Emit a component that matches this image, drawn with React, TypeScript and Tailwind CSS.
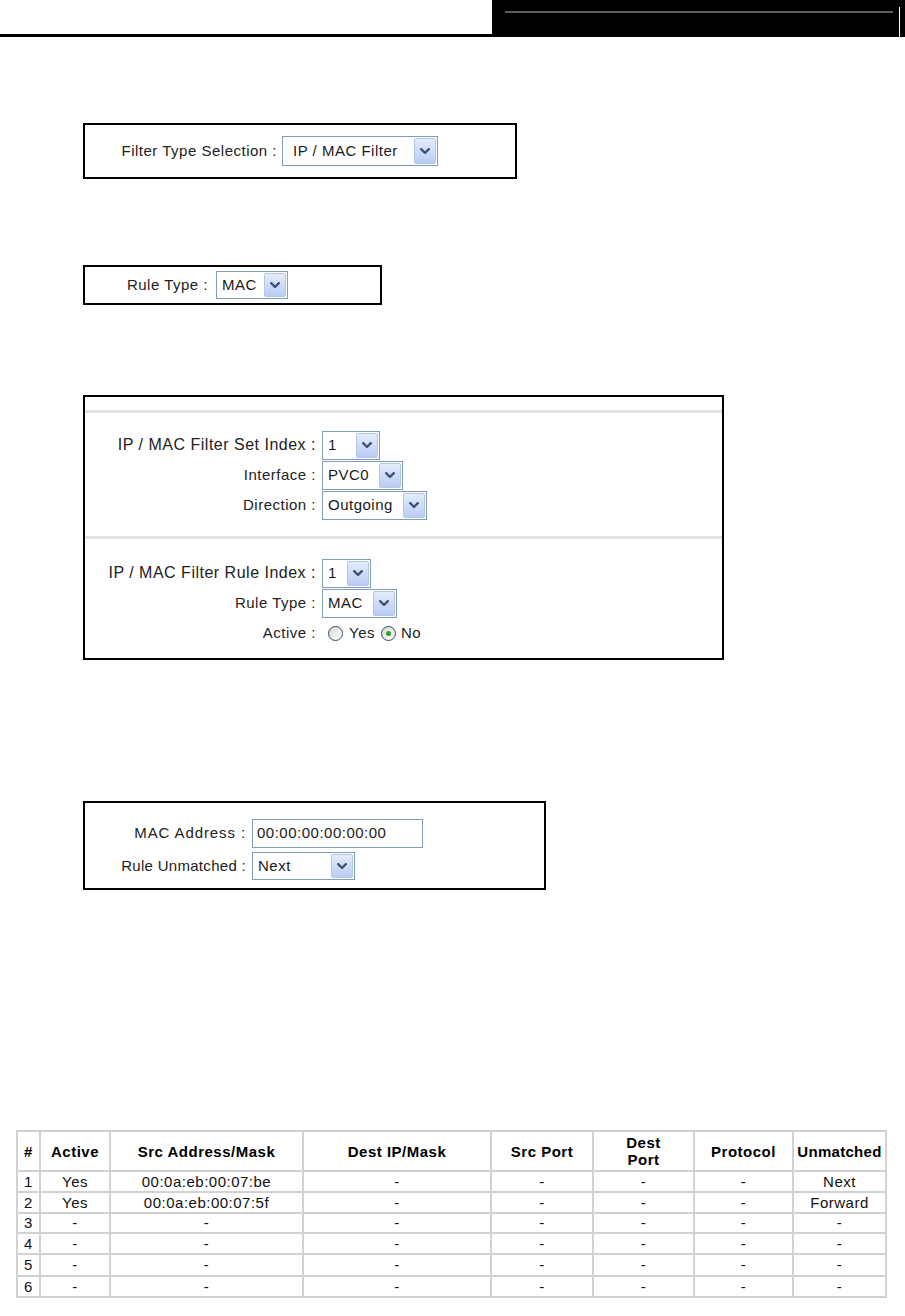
import React from "react";

const FONT = { fontFamily: '"Liberation Sans", Arial, Helvetica, sans-serif' };

function Chevron() {
  return (
    <svg width="10" height="7" viewBox="0 0 10 7">
      <path d="M1.2 1.2 L5 5 L8.8 1.2" fill="none" stroke="#3f5378" strokeWidth="2.4" strokeLinecap="round" strokeLinejoin="round" />
    </svg>
  );
}

function Select({ text, className }: { text: string; className: string }) {
  return (
    <div className={"flex items-stretch border border-[#7f9db9] bg-white p-[1px] " + className}>
      <span className="flex flex-1 items-center pl-[4px] text-[#1a1a1a]">{text}</span>
      <div className="flex w-[22px] items-center justify-center rounded-[2px] border border-[#b4c6ea] bg-gradient-to-b from-[#e4ecfc] to-[#b9ccf3]">
        <Chevron />
      </div>
    </div>
  );
}

function Radio({ checked }: { checked?: boolean }) {
  return (
    <div className="flex h-[15px] w-[15px] items-center justify-center rounded-full border border-[#2c4a6e] bg-gradient-to-br from-[#d8d8d2] to-white">
      {checked && <div className="h-[5px] w-[5px] rounded-full bg-[#2aa52a]" />}
    </div>
  );
}

function Row({ label, children, wide }: { label: string; children: React.ReactNode; wide?: string }) {
  return (
    <div className="flex h-[30px] items-center">
      <div className={"w-[231px] text-right text-[#222] " + (wide ?? "")}>{label}</div>
      <div className="ml-[6px] flex items-center">{children}</div>
    </div>
  );
}

const rows = [
  ["1", "Yes", "00:0a:eb:00:07:be", "-", "-", "-", "-", "Next"],
  ["2", "Yes", "00:0a:eb:00:07:5f", "-", "-", "-", "-", "Forward"],
  ["3", "-", "-", "-", "-", "-", "-", "-"],
  ["4", "-", "-", "-", "-", "-", "-", "-"],
  ["5", "-", "-", "-", "-", "-", "-", "-"],
  ["6", "-", "-", "-", "-", "-", "-", "-"],
];
const rowH = ["h-[21px]", "h-[21px]", "h-[20px]", "h-[21px]", "h-[22px]", "h-[21px]"];

export default function App() {
  return (
    <div className="min-h-[1316px] w-[905px] bg-white text-[15px] tracking-[0.5px]" style={FONT}>
      {/* top bar */}
      <div className="flex h-[37px]">
        <div className="flex flex-1 flex-col justify-end">
          <div className="h-[3px] bg-black" />
        </div>
        <div className="relative w-[413px] bg-black">
          <div className="absolute left-[13px] right-[12px] top-[11px] h-[2px] bg-[#5c5c5c]" />
          <div className="absolute bottom-0 right-[5px] top-[7px] w-[1px] bg-white" />
        </div>
      </div>

      {/* Filter type selection */}
      <div className="ml-[83px] mt-[86px] flex h-[56px] w-[434px] items-center border-2 border-black">
        <div className="w-[192px] text-right text-[#222]">Filter Type Selection :</div>
        <Select text="IP / MAC Filter" className="ml-[5px] h-[30px] w-[156px] pl-[6px]" />
      </div>

      {/* Rule type */}
      <div className="ml-[83px] mt-[86px] flex h-[40px] w-[299px] items-center border-2 border-black">
        <div className="w-[123px] text-right text-[#222]">Rule Type :</div>
        <Select text="MAC" className="ml-[8px] h-[28px] w-[72px]" />
      </div>

      {/* big box */}
      <div className="ml-[83px] mt-[90px] w-[641px] border-2 border-black pt-[13px]">
        <div className="h-[3px] bg-[#e2e2e2]" />
        <div className="pb-[16px] pt-[17px]">
          <Row label="IP / MAC Filter Set Index :" wide="text-[16px]">
            <Select text="1" className="h-[29px] w-[58px]" />
          </Row>
          <Row label="Interface :">
            <Select text="PVC0" className="h-[29px] w-[81px]" />
          </Row>
          <Row label="Direction :">
            <Select text="Outgoing" className="h-[29px] w-[105px]" />
          </Row>
        </div>
        <div className="h-[3px] bg-[#e2e2e2]" />
        <div className="pb-[10px] pt-[19px]">
          <Row label="IP / MAC Filter Rule Index :" wide="text-[16px]">
            <Select text="1" className="h-[29px] w-[49px]" />
          </Row>
          <Row label="Rule Type :">
            <Select text="MAC" className="h-[29px] w-[75px]" />
          </Row>
          <Row label="Active :">
            <div className="ml-[6px] flex items-center">
              <Radio />
              <span className="ml-[6px] text-[#222]">Yes</span>
              <div className="ml-[6px]">
                <Radio checked />
              </div>
              <span className="ml-[5px] text-[#222]">No</span>
            </div>
          </Row>
        </div>
      </div>

      {/* MAC box */}
      <div className="ml-[83px] mt-[141px] flex h-[89px] w-[463px] flex-col border-2 border-black pt-[16px]">
        <div className="flex h-[29px] items-center">
          <div className="w-[161px] text-right text-[#222] tracking-[0.9px]">MAC Address :</div>
          <div className="ml-[6px] flex h-[29px] w-[171px] items-center border border-[#7f9db9] pl-[4px] text-[#1a1a1a]">
            00:00:00:00:00:00
          </div>
        </div>
        <div className="mt-[4px] flex h-[28px] items-center">
          <div className="w-[161px] text-right text-[#222] tracking-[0.3px]">Rule Unmatched :</div>
          <Select text="Next" className="ml-[6px] h-[28px] w-[103px]" />
        </div>
      </div>

      {/* table */}
      <table className="ml-[16px] mt-[240px] w-[869px] table-fixed border-collapse border-2 border-[#d2d2d2] text-center text-[15px] text-[#111]">
        <colgroup>
          <col className="w-[23px]" />
          <col className="w-[70px]" />
          <col className="w-[193px]" />
          <col className="w-[188px]" />
          <col className="w-[102px]" />
          <col className="w-[101px]" />
          <col className="w-[99px]" />
          <col className="w-[93px]" />
        </colgroup>
        <thead>
          <tr className="h-[40px] font-bold text-black">
            <th className="border-2 border-[#d2d2d2] p-0 leading-[17px]">#</th>
            <th className="border-2 border-[#d2d2d2] p-0 leading-[17px]">Active</th>
            <th className="border-2 border-[#d2d2d2] p-0 leading-[17px]">Src Address/Mask</th>
            <th className="border-2 border-[#d2d2d2] p-0 leading-[17px]">Dest IP/Mask</th>
            <th className="border-2 border-[#d2d2d2] p-0 leading-[17px]">Src Port</th>
            <th className="border-2 border-[#d2d2d2] p-0 leading-[17px]">
              Dest
              <br />
              Port
            </th>
            <th className="border-2 border-[#d2d2d2] p-0 leading-[17px]">Protocol</th>
            <th className="border-2 border-[#d2d2d2] p-0 tracking-[0.3px] leading-[17px]">Unmatched</th>
          </tr>
        </thead>
        <tbody>
          {rows.map((r, i) => (
            <tr key={i} className={rowH[i]}>
              {r.map((c, j) => (
                <td key={j} className="border-2 border-[#d2d2d2] p-0 leading-[16px]">
                  {c}
                </td>
              ))}
            </tr>
          ))}
        </tbody>
      </table>
    </div>
  );
}
